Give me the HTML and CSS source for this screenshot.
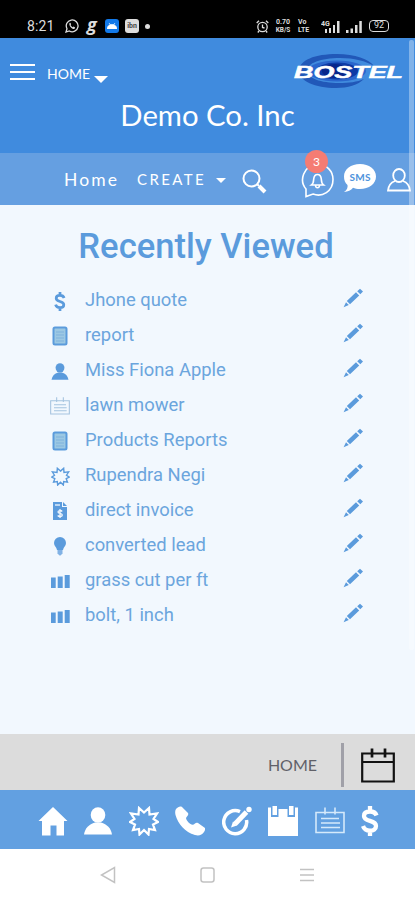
FILE: index.html
```html
<!DOCTYPE html>
<html lang="en">
<head>
  <meta charset="utf-8">
  <meta name="viewport" content="width=device-width, initial-scale=1">
  <title>Demo Co. Inc</title>
  <link rel="stylesheet" href="styles.css">
</head>
<body>

  <!-- shared icons -->
  <svg class="sprite">
    <symbol id="dollar" viewBox="0 0 18 30">
      <path d="M9 0v6M9 24v6M15.500 9.500C14.500 6.500 12 5.500 9 5.500c-4 0-6 1.700-6 4.500 0 6.500 12 3.300 12 10 0 3-2.500 4.700-6 4.700-3.800 0-6-1.500-7-4.700" fill="none" stroke="currentColor" stroke-width="4.300"/>
    </symbol>
    <symbol id="report" viewBox="0 0 16 20">
      <rect x="1.500" y="1.500" width="13" height="17" rx="1.500" fill="#9cc8e3" stroke="#5b9bdc" stroke-width="2"/>
      <path d="M4 6h8M4 9h8M4 12h8M4 15h8" stroke="#7fb2dd" stroke-width="1"/>
    </symbol>
    <symbol id="person" viewBox="0 0 28 28">
      <ellipse cx="14" cy="8" rx="7.300" ry="7.700"/>
      <path d="M0 27.500C1 21 5 17.500 11 15.500h6c6 2 10 5.500 11 12z"/>
    </symbol>
    <symbol id="note" viewBox="0 0 30 26">
      <path d="M1 5h28v20H1zM10 0v7M20 0v7M6 11h18M6 15.500h19M6 20h19" fill="none" stroke="currentColor" stroke-width="1.600"/>
    </symbol>
    <symbol id="star" viewBox="0 0 30 30">
      <path d="M15 6.500l5-4.500 .5 6.500 7.500-1-3.500 5.500 4.500 3-5 2.500 2 5.500-6-1-.5 5.500L15 24l-4.500 4.500-.5-5.500-6 1 2-5.500-5-2.500 4.500-3L2 7.500l7.500 1L10 2z" fill="none" stroke="currentColor" stroke-width="2.200"/>
    </symbol>
    <symbol id="invoice" viewBox="0 0 16 20">
      <path d="M1 1h9v5h5v13H1z"/>
      <path d="M11 1l4 4h-4z"/>
      <path d="M3 4h5" stroke="#f2f8fe" stroke-width="1.300"/>
      <path d="M8 8v9M10.200 10.500C9 9 6 9.300 6 11s4.300 1.200 4.300 3-3.300 2-4.600.5" fill="none" stroke="#f2f8fe" stroke-width="1.300"/>
    </symbol>
    <symbol id="bulb" viewBox="0 0 14 20">
      <path d="M7 1a6 6 0 0 1 6 6c0 3-2.500 4-3 7H4c-.5-3-3-4-3-7a6 6 0 0 1 6-6z"/>
      <path d="M4.500 14h5v3.500L7.500 19.500h-1l-2-2z" opacity=".75"/>
    </symbol>
    <symbol id="bars" viewBox="0 0 20 14">
      <path d="M1 3.500h4.700V14H1zM7.700 2.500h5V14h-5zM14.700 1h5v13h-5z"/>
    </symbol>
    <symbol id="pencil" viewBox="0 0 20 20">
      <path d="M3.800 13L13 4.300l3.200 3.200L7 16.300zM14.200 3.200L17 .8l3 2.800-2.700 2.700zM3 14.200L5.800 17 .6 19.200z"/>
    </symbol>
  </svg>

  <div class="phone">
    <div class="status">
      <span class="time">8:21</span>
      <svg class="whatsapp" width="14" height="14" viewBox="0 0 14 14">
        <path d="M1 13l1-3.300A5.900 5.900 0 1 1 4.300 12z" fill="none" stroke="#ddd" stroke-width="1.300"/>
        <path d="M4.300 4.500c.5-1 1.200-1 1.500 0l.3.900-.6.700c.5 1 1.200 1.700 2.200 2.200l.8-.7 1.300.6c.8.500 0 1.700-1 1.800-2 0-4.700-2.700-4.500-5.500z" fill="#ddd"/>
      </svg>
      <span class="g">g</span>
      <span class="app android">
        <svg width="10" height="6" viewBox="0 0 10 6"><path d="M0 6a5 4.500 0 0 1 10 0zM2 0l1.500 2M8 0L6.500 2" fill="#fff" stroke="#fff" stroke-width=".7"/></svg>
      </span>
      <span class="app ibn">ibn</span>
      <span class="dot"></span>
      <div class="status-right">
        <svg width="13" height="13" viewBox="0 0 13 13" fill="none" stroke="#ddd" stroke-width="1.300">
          <circle cx="6.500" cy="7" r="4.700"/>
          <path d="M.7 3L3 .8M12.300 3L10 .8M6.500 4.500V7.500L8.500 8M3 11l-1.200 1.500M10 11l1.200 1.500"/>
        </svg>
        <span class="speed"><b>0.70</b><b class="unit">KB/S</b></span>
        <span class="volte"><b>Vo</b><b>LTE</b></span>
        <svg class="signal" width="20" height="13" viewBox="0 0 20 13" fill="#ddd">
          <text x="0" y="6" font-size="7" class="net">4G</text>
          <path d="M4 9h2v4H4zM8 8h2v5H8zM12 5h2v8h-2zM16 1h2.500v12H16z"/>
        </svg>
        <svg class="signal2" width="16" height="13" viewBox="0 0 16 13" fill="#ddd">
          <path d="M0 10h2.500v3H0zM4.500 8.500H7V13H4.500zM9 5h2.500v8H9zM13.300 1h2.500v12h-2.500z"/>
        </svg>
        <span class="battery">92</span>
      </div>
    </div>

    <header class="header">
      <div class="topbar">
        <div class="burger"><i></i><i></i><i></i></div>
        <span class="menu-title">HOME</span>
        <span class="caret"></span>
        <svg class="logo" width="112" height="38" viewBox="0 0 112 38">
          <path d="M6 19C6 8 22 2 44 2c18 0 32 5 37 12-8-5-20-8-34-8C28 6 14 11 14 19c0 7 14 12 32 12 10 0 18-1 25-4-6 6-16 9-28 9C22 36 6 29 6 19z" fill="#2158b8"/>
          <ellipse cx="44" cy="19" rx="29" ry="10.500" fill="#2a66cc"/>
          <ellipse cx="44" cy="19" rx="21" ry="8.500" fill="#0d3aa5"/>
          <ellipse cx="42" cy="19" rx="13" ry="7" fill="#08268a"/>
          <text class="logo-text" x="1" y="25.500" textLength="109" lengthAdjust="spacingAndGlyphs">BOSTEL</text>
        </svg>
      </div>
      <h1 class="company">Demo Co. Inc</h1>
    </header>

    <nav class="nav">
      <a class="nav-home">Home</a>
      <a class="nav-create">CREATE</a>
      <span class="caret small"></span>
      <svg class="search" width="25" height="25" viewBox="0 0 25 25" fill="none" stroke="#fff">
        <circle cx="9.500" cy="9.500" r="8" stroke-width="2"/>
        <path d="M15 15l2 2" stroke-width="2"/>
        <path d="M17 17l6 6" stroke-width="4"/>
      </svg>
      <div class="bell">
        <svg width="33" height="36" viewBox="0 0 33 36" fill="none" stroke="#fff" stroke-width="1.600">
          <path d="M5 34.500V27C-2 19 2 3 16.500 2.500 26 2.500 32 9 32 17.500c0 12-11 18-20 14.500z"/>
          <path d="M10.500 23c2-1.500 2-3 2.200-6 .3-3 1.500-4.500 3.800-4.500s3.500 1.500 3.800 4.500c.2 3 .2 4.500 2.200 6zM14.500 23.500c.3 3 3.700 3 4 0"/>
        </svg>
        <span class="badge">3</span>
      </div>
      <svg class="sms" width="34" height="30" viewBox="0 0 34 30">
        <path d="M17 1C26 1 33 6 33 13.500S26 26 17 26c-3 0-5-.4-7-1.200-2 2.700-5 4-9 4.200 3-2 4-4.500 3.500-7C2 20 1 17 1 13.500 1 6 8 1 17 1z" fill="#fff"/>
        <text class="sms-text" x="6.500" y="17.500" textLength="21">SMS</text>
      </svg>
      <svg class="user" width="24" height="24" viewBox="0 0 24 24" fill="none" stroke="#fff" stroke-width="1.800">
        <ellipse cx="12" cy="7.500" rx="5.800" ry="6.500"/>
        <path d="M8 13c-4 1.500-6.500 4-7 9.500h22c-.5-5.500-3-8-7-9.500"/>
      </svg>
    </nav>

    <main class="content">
      <h2>Recently Viewed</h2>
      <ul class="recent">
        <li><svg class="ico" width="12" height="19"><use href="#dollar"/></svg><span>Jhone quote</span><svg class="edit"><use href="#pencil"/></svg></li>
        <li><svg class="ico" width="16" height="20"><use href="#report"/></svg><span>report</span><svg class="edit"><use href="#pencil"/></svg></li>
        <li><svg class="ico" width="18" height="17"><use href="#person"/></svg><span>Miss Fiona Apple</span><svg class="edit"><use href="#pencil"/></svg></li>
        <li><svg class="ico pale" width="20" height="18"><use href="#note"/></svg><span>lawn mower</span><svg class="edit"><use href="#pencil"/></svg></li>
        <li><svg class="ico" width="16" height="20"><use href="#report"/></svg><span>Products Reports</span><svg class="edit"><use href="#pencil"/></svg></li>
        <li><svg class="ico" width="19" height="19"><use href="#star"/></svg><span>Rupendra Negi</span><svg class="edit"><use href="#pencil"/></svg></li>
        <li><svg class="ico" width="16" height="20"><use href="#invoice"/></svg><span>direct invoice</span><svg class="edit"><use href="#pencil"/></svg></li>
        <li><svg class="ico" width="14" height="20"><use href="#bulb"/></svg><span>converted lead</span><svg class="edit"><use href="#pencil"/></svg></li>
        <li><svg class="ico" width="20" height="14"><use href="#bars"/></svg><span>grass cut per ft</span><svg class="edit"><use href="#pencil"/></svg></li>
        <li><svg class="ico" width="20" height="14"><use href="#bars"/></svg><span>bolt, 1 inch</span><svg class="edit"><use href="#pencil"/></svg></li>
      </ul>
    </main>

    <div class="crumb">
      <span>HOME</span>
      <div class="divider"></div>
      <svg width="34" height="36" viewBox="0 0 34 36" fill="none" stroke="#111" stroke-width="2.200">
        <path d="M1.200 5.500h31.600v28H1.200zM1.200 14h31.600"/>
        <path d="M11 .5v9M24 .5v9" stroke-width="2.700"/>
      </svg>
    </div>

    <div class="tabs">
      <svg width="30" height="30" viewBox="0 0 30 30" fill="#fff"><path d="M15 1l14.500 14H26v14.500h-7.500v-10h-6v10H4V15H.5z"/></svg>
      <svg width="28" height="28"><use href="#person"/></svg>
      <svg width="30" height="30"><use href="#star"/></svg>
      <svg width="30" height="30" viewBox="0 0 30 30" fill="#fff"><path d="M1 3C3 1 5 0 7 1l6 6c.5 1 .3 2-1 3.500-1.500 1.500-1 2.500 0 4 1 1.500 2 2.500 3.500 3.500 1.500 1 3 1 4.500-.5 1-1 2-1 3-.5l7 5c.5 1 0 2.500-1 4-2 3-5 4-9 3C10 26 3 18 .5 9 0 7 0 4.500 1 3z"/></svg>
      <svg width="30" height="30" viewBox="0 0 30 30" fill="none" stroke="#fff">
        <path d="M18 5.700A11.500 11.500 0 1 0 24.500 14" stroke-width="3.500"/>
        <path d="M13 18L24.500 6" stroke-width="5"/>
        <path d="M9 21.500l2-6 4 4z" fill="#fff" stroke="none"/>
        <circle cx="27" cy="3.500" r="2.700" fill="#fff" stroke="none"/>
      </svg>
      <svg width="30" height="30" viewBox="0 0 30 30">
        <path d="M0 1.500h3V11h7.500V3h9v8H27V1.500h3V30H0z" fill="#fff"/>
        <path d="M4.500 0H9v9H4.500zM21 0h4.500v9H21z" fill="#fff"/>
      </svg>
      <svg class="tab-note" width="30" height="27"><use href="#note"/></svg>
      <svg width="18" height="30"><use href="#dollar"/></svg>
    </div>

    <div class="system">
      <svg width="16" height="18" viewBox="0 0 16 18"><path d="M14.500 1.500v15L1.500 9z"/></svg>
      <svg width="15" height="16" viewBox="0 0 15 16"><rect x="1" y="1" width="13" height="14" rx="2.500"/></svg>
      <svg width="16" height="14" viewBox="0 0 16 14"><path d="M1 1.500h14M1 7h14M1 12.500h14"/></svg>
    </div>

    <div class="scroll"></div>
  </div>

</body>
</html>
```
FILE: styles.css
```css
* {
  box-sizing: border-box;
}

body {
  margin: 0;
  font-family: Roboto, sans-serif;
  background: #fff;
}

svg {
  display: block;
  flex: none;
}

.sprite {
  position: absolute;
  width: 0;
  height: 0;
}

.phone {
  position: relative;
  width: 415px;
  height: 900px;
  overflow: hidden;
  display: flex;
  flex-direction: column;
}

/* status bar */
.status {
  height: 38px;
  padding: 14px 26px 0 27px;
  background: #000;
  color: #ddd;
  display: flex;
  align-items: center;
}

.time {
  width: 38px;
  font-size: 14px;
  letter-spacing: 0.1px;
}

.g {
  width: 13px;
  margin: -5px 5px 0 8px;
  font: italic bold 18px/18px "Open Sans", sans-serif;
}

.app {
  width: 14px;
  height: 14px;
  margin-right: 6px;
  border-radius: 3px;
  display: flex;
  align-items: center;
  justify-content: center;
}

.android {
  background: #1379e8;
}

.ibn {
  background: #ddd;
  color: #444;
  font-size: 7px;
  font-weight: bold;
}

.dot {
  width: 5px;
  height: 5px;
  border-radius: 50%;
  background: #ddd;
}

.status-right {
  margin-left: auto;
  display: flex;
  align-items: center;
}

.speed, .volte {
  display: flex;
  flex-direction: column;
  align-items: center;
  font-size: 7px;
  line-height: 8px;
}

.speed {
  width: 18px;
  margin-left: 5px;
}

.unit {
  font-size: 6.5px;
}

.volte {
  width: 15px;
  margin-left: 6px;
  align-items: flex-start;
}

.net {
  font-weight: bold;
}

.signal {
  margin-left: 8px;
}

.signal2 {
  margin-left: 5px;
}

.battery {
  width: 20px;
  height: 12px;
  margin-left: 7px;
  border: 1.5px solid #ddd;
  border-radius: 4px;
  font-size: 9px;
  line-height: 9px;
  text-align: center;
}

/* header */
.header {
  height: 115px;
  background: #408bde;
  color: #fff;
  font-family: Lato, sans-serif;
}

.topbar {
  height: 61px;
  padding: 14px 10px 0;
  display: flex;
  align-items: flex-start;
}

.burger {
  width: 25px;
  margin-top: 12px;
}

.burger i {
  display: block;
  height: 2px;
  margin-bottom: 5px;
  background: #fff;
}

.menu-title {
  margin: 13px 4px 0 12px;
  font-size: 14px;
  line-height: 18px;
}

.caret {
  margin-top: 24px;
  border: 7px solid transparent;
  border-top: 7px solid #fff;
  border-bottom: 0;
}

.logo {
  margin-left: auto;
}

.logo-text {
  font: italic bold 17px "Liberation Sans", sans-serif;
  fill: #fff;
  stroke: #fff;
  stroke-width: 0.5px;
}

.company {
  margin: 0;
  font-size: 29.3px;
  font-weight: normal;
  line-height: 32px;
  text-align: center;
}

/* nav */
.nav {
  height: 52px;
  padding-left: 64px;
  background: #659fe1;
  color: #fff;
  font-family: Lato, sans-serif;
  display: flex;
  align-items: center;
}

.nav-home {
  width: 73px;
  font-size: 17.5px;
  letter-spacing: 2.1px;
}

.nav-create {
  width: 79px;
  font-size: 15px;
  letter-spacing: 2.4px;
}

.small {
  margin-top: 2px;
  border-width: 5px;
  border-bottom-width: 0;
}

.search {
  margin: 4px 0 0 16px;
}

.bell {
  position: relative;
  margin: 1px 9px 0 34px;
}

.badge {
  position: absolute;
  left: 4px;
  top: -12px;
  width: 23px;
  height: 23px;
  border-radius: 50%;
  background: #f57c73;
  font-size: 12px;
  line-height: 23px;
  text-align: center;
}

.sms {
  margin-top: -3px;
}

.sms-text {
  font: bold 10px Lato, sans-serif;
  fill: #4f93dc;
}

.user {
  margin: 1px 0 0 10px;
}

/* recent list */
.content {
  height: 529px;
  background: #f2f8fe;
  color: #5b9bdc;
}

.content h2 {
  margin: 0;
  padding: 20px 3px 0 0;
  font-size: 34.6px;
  font-weight: 500;
  line-height: 42px;
  text-align: center;
}

.recent {
  margin: 15px 0 0;
  padding: 0 52px 0 50px;
  list-style: none;
}

.recent li {
  height: 35px;
  display: grid;
  grid-template-columns: 20px 1fr 20px;
  column-gap: 15px;
  align-items: center;
  color: #6ba5dd;
  font-size: 18.4px;
}

.ico {
  margin-top: 3px;
  justify-self: center;
  color: #5b9bdc;
  fill: #5b9bdc;
}

.pale {
  color: #a5c4df;
}

.edit {
  width: 20px;
  height: 20px;
  margin-top: -3px;
  fill: #5b9bdc;
}

/* bottom bars */
.crumb {
  height: 56px;
  padding-right: 20px;
  background: #dcdcdc;
  color: #606068;
  font: 16px Lato, sans-serif;
  display: flex;
  align-items: center;
  justify-content: flex-end;
}

.crumb span {
  margin-top: 5px;
}

.crumb svg {
  margin-top: 8px;
}

.divider {
  width: 3px;
  height: 44px;
  margin: 6px 17px 0 24px;
  background: #a0a0a8;
}

.tabs {
  height: 59px;
  padding: 2px 36px 0 38px;
  background: #62a0e1;
  color: #fff;
  fill: #fff;
  display: flex;
  align-items: center;
  justify-content: space-between;
}

.tab-note {
  color: #d5e9fb;
}

.system {
  flex: 1;
  padding: 0 100px;
  display: flex;
  align-items: center;
  justify-content: space-between;
  fill: none;
  stroke: #c2c2c2;
  stroke-width: 1.5;
}

/* scrollbar overlay */
.scroll {
  position: absolute;
  top: 40px;
  right: 1px;
  width: 5px;
  height: 610px;
  border-radius: 2px;
  background: rgba(255, 255, 255, 0.35);
}
```
